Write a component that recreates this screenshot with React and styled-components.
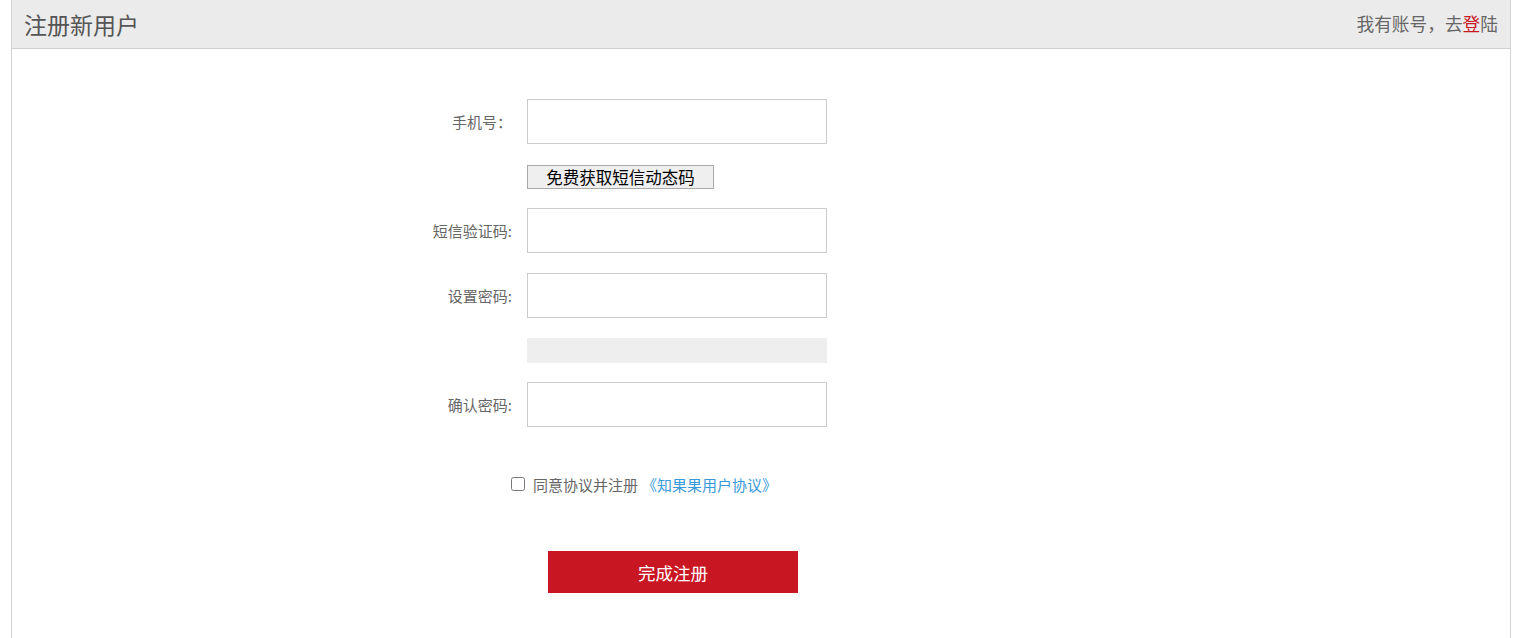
import React from "react";
import styled, { createGlobalStyle } from "styled-components";

const Global = createGlobalStyle`
  html, body { margin: 0; padding: 0; background: #fff; }
  body { font-family: "Microsoft YaHei", "Noto Sans CJK SC", "Noto Sans", sans-serif; }
  * { box-sizing: border-box; }
`;

const Page = styled.div`
  margin-left: 11px;
  width: 1500px;
  min-height: 100vh;
  border-left: 1px solid #d2d2d2;
  border-right: 1px solid #d2d2d2;
`;

const Header = styled.div`
  height: 49px;
  background: #ebebeb;
  border-bottom: 1px solid #cfcfcf;
  display: flex;
  align-items: center;
  justify-content: space-between;
  padding: 0 12px 0 12px;
`;

const Title = styled.h1`
  margin: 0;
  font-size: 23px;
  font-weight: normal;
  color: #555;
  line-height: 1;
`;

const LoginHint = styled.div`
  font-size: 17.7px;
  color: #666;
  line-height: 1;
`;

const LoginLink = styled.a`
  color: #c81623;
  text-decoration: none;
`;

const Form = styled.form`
  padding-top: 50px;
  margin-left: 400px;
  display: flex;
  flex-direction: column;
`;

const Row = styled.div`
  display: flex;
  align-items: center;
  margin-top: ${(p) => p.$gap || 0}px;
`;

const Label = styled.label`
  width: 115px;
  padding-right: 15px;
  text-align: right;
  font-size: 15px;
  color: #666;
`;

const Input = styled.input`
  width: 300px;
  height: 45px;
  border: 1px solid #cccccc;
  outline: none;
  padding: 0 10px;
  font-size: 14px;
  background: #fff;
`;

const Spacer = styled.div`
  width: 115px;
  flex-shrink: 0;
`;

const SmsButton = styled.button`
  width: 187px;
  height: 24px;
  padding: 0;
  border: 1px solid #a9a9a9;
  background: #efefef;
  color: #000;
  font-family: inherit;
  font-size: 16.5px;
  line-height: 22px;
  cursor: pointer;
`;

const Strength = styled.div`
  width: 300px;
  height: 25px;
  background: #eeeeee;
`;

const Agree = styled.div`
  display: flex;
  align-items: center;
  margin-top: 47px;
  padding-left: 99px;
  height: 20px;
  font-size: 15px;
  color: #666;
`;

const Check = styled.input`
  width: 14px;
  height: 14px;
  margin: 0 8px 0 0;
`;

const AgreeLink = styled.a`
  color: #3a9ad9;
  text-decoration: none;
  margin-left: 4px;
`;

const Submit = styled.button`
  margin-top: 57px;
  margin-left: 136px;
  width: 250px;
  height: 42px;
  border: none;
  background: #c81623;
  color: #fff;
  font-family: inherit;
  font-size: 17.5px;
  cursor: pointer;
`;

export default function App() {
  return (
    <>
      <Global />
      <Page>
        <Header>
          <Title>注册新用户</Title>
          <LoginHint>
            我有账号，去<LoginLink href="#">登</LoginLink>陆
          </LoginHint>
        </Header>
        <Form onSubmit={(e) => e.preventDefault()}>
          <Row>
            <Label>手机号：</Label>
            <Input type="text" />
          </Row>
          <Row $gap={21}>
            <Spacer />
            <SmsButton type="button">免费获取短信动态码</SmsButton>
          </Row>
          <Row $gap={19}>
            <Label>短信验证码:</Label>
            <Input type="text" />
          </Row>
          <Row $gap={20}>
            <Label>设置密码:</Label>
            <Input type="password" />
          </Row>
          <Row $gap={20}>
            <Spacer />
            <Strength />
          </Row>
          <Row $gap={19}>
            <Label>确认密码:</Label>
            <Input type="password" />
          </Row>
          <Agree>
            <Check type="checkbox" />
            同意协议并注册
            <AgreeLink href="#">《知果果用户协议》</AgreeLink>
          </Agree>
          <Submit type="submit">完成注册</Submit>
        </Form>
      </Page>
    </>
  );
}
